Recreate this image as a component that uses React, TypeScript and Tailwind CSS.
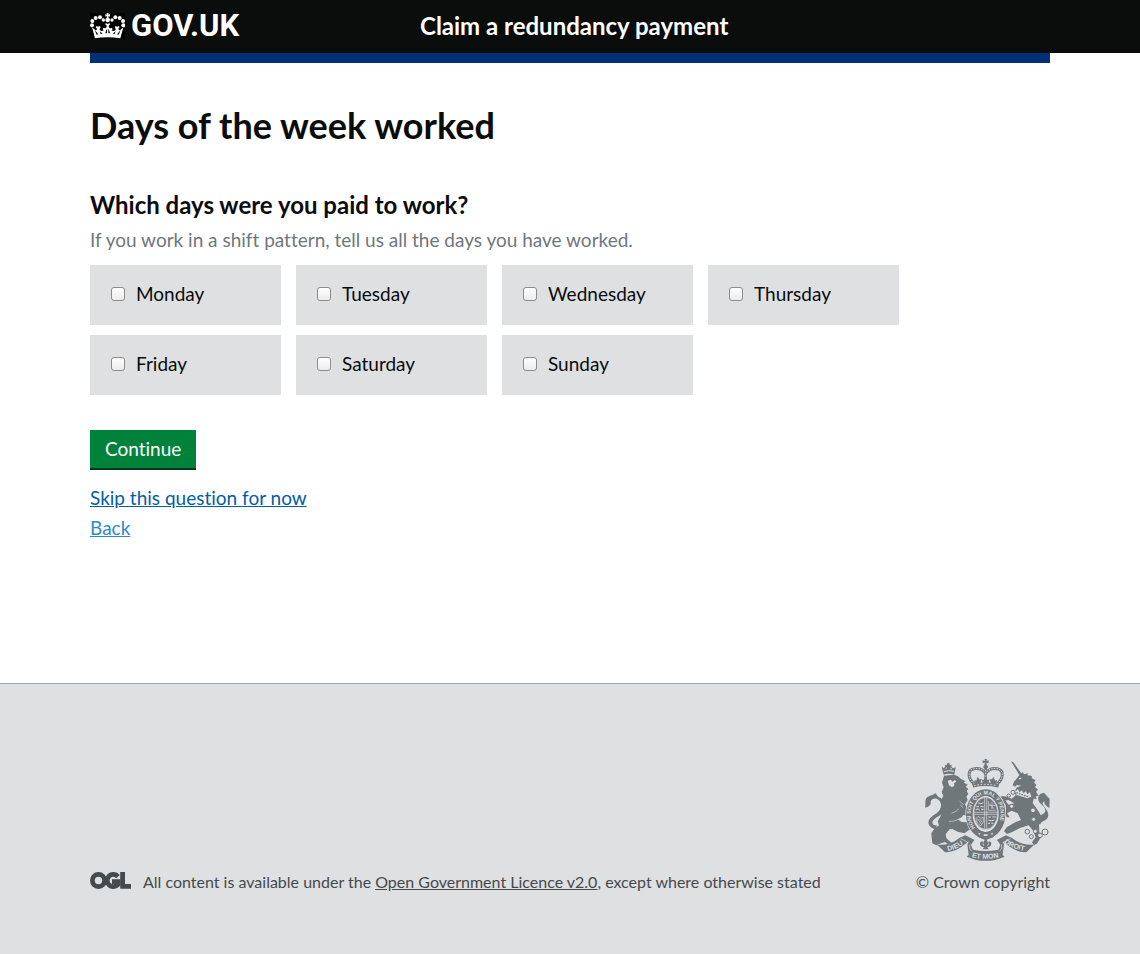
import React from "react";

const days = ["Monday", "Tuesday", "Wednesday", "Thursday", "Friday", "Saturday", "Sunday"];

function Crown() {
  return (
    <svg viewBox="30 39 105 78" className="h-[26px] w-[35px] bg-black" fill="#fff" aria-hidden="true">
      <path d="M80 39h6l-1 5 5-2v8l-5-2 1 6h-6l1-6-5 2v-8l5 2z" />
      <circle cx="83" cy="60" r="7" />
      <circle cx="70" cy="60" r="5" />
      <circle cx="60" cy="52" r="6" />
      <circle cx="47" cy="54" r="6" />
      <circle cx="37" cy="63" r="6" />
      <circle cx="36" cy="76" r="6" />
      <circle cx="96" cy="60" r="5" />
      <circle cx="106" cy="52" r="6" />
      <circle cx="119" cy="54" r="6" />
      <circle cx="129" cy="63" r="6" />
      <circle cx="130" cy="76" r="6" />
      <path d="M36 82L46 91Q51 91 51 86Q45 83 49 78L54 80L59 78Q64 83 58 87L63 93Q69 94 71 91Q66 88 70 84L76 85Q81 83 80 76Q74 77 77 69L83 72L89 69Q92 77 86 76Q85 83 90 85L96 84Q100 88 95 91Q97 94 103 93L108 87Q102 83 107 78L112 80L117 78Q121 83 115 86Q115 91 120 91L130 82L121 115Q83 108 45 115Z" />
      <path d="M50 104l-6-14 11 13zM62 102l-3-8 9 7zM76 100l3-11 4-2 4 2 3 11zM104 102l3-8-9 7zM116 104l6-14-11 13z" fill="#000" />
      <path d="M83 88v14" stroke="#fff" strokeWidth="4" />
    </svg>
  );
}

function Ogl() {
  return (
    <svg viewBox="0 0 41 17" className="mt-0.5 h-[17px] w-[41px]" fill="none" stroke="#454a4c" strokeWidth="4.8" aria-hidden="true">
      <circle cx="8.500" cy="8.500" r="6.100" />
      <path d="M28 4.600A6.100 6.100 0 1 0 28 12.400V9.600H22" />
      <path d="M32.600 0V14.400H41" />
    </svg>
  );
}

function Arms() {
  return (
    <svg viewBox="30 27 375 306" className="h-[102px] w-[125px]" fill="#6f777b" aria-hidden="true">
      <g>
        <path d="M80 50L87 55L91 48L89 44L95 46L96 41L100 38L104 41L105 46L110 44L109 50L114 55L122 52L118 74Q101 68 86 74Z" />
        <path d="M87 65q14-6 30-1M92 56l4-3M106 54l5 3" stroke="#dee0e2" strokeWidth="3" fill="none" />
        <path d="M87 77L115 74L128 78L139 88L150 92L147 98L158 104L152 110L160 117L155 123L160 132L154 140L158 150L150 163L156 176L148 190L140 202L128 208L140 216L162 217L172 228L176 242L162 240L148 250L128 245L112 237L104 238L92 252L94 264L102 272L112 280L98 282L90 276L78 280L64 286L52 280L50 264L49 250L58 236L72 226L68 214L76 200L80 186L76 176L84 162L78 150L85 138L80 126L86 112L81 98Z" />
        <path d="M98 92l10-3 4 6 8-5 4 5-7 5 1 7-7 5-9-6z" fill="#dee0e2" />
        <path d="M110 190Q124 186 134 174M102 214Q116 216 130 208M134 154l12 10M136 164l10 12" stroke="#dee0e2" strokeWidth="2" fill="none" />
        <path d="M130 172l24 3 10 9-6 5 8 6-12 3-20-8z" />
        <path d="M62 237C36 232 35 211 50 200C63 191 83 181 77 159C72 142 52 141 47 154C49 165 42 170 30 173C33 161 28 151 36 142C45 136 60 134 61 129L70 141C87 147 94 160 87 180C81 198 58 202 53 214C50 222 56 227 66 226Z" />
      </g>

      <g fill="none" stroke="#6f777b">
        <path d="M178 102C160 88 154 60 178 56C196 53 205 60 212 70C219 60 228 53 246 56C270 60 264 88 246 102" strokeWidth="9" />
        <path d="M178 102C160 88 154 60 178 56C196 53 205 60 212 70C219 60 228 53 246 56C270 60 264 88 246 102" stroke="#dee0e2" strokeWidth="3" strokeDasharray="4 4" />
        <path d="M212 50v50" strokeWidth="8" />
        <path d="M212 60v30" stroke="#dee0e2" strokeWidth="3" strokeDasharray="4 4" />
        <path d="M173 107q39-9 78 0" strokeWidth="11" />
        <path d="M177 107q35-8 70 0" stroke="#dee0e2" strokeWidth="3" strokeDasharray="5 5" />
      </g>
      <path d="M208 27h8l-2 6 7-2v9l-7-2 2 7 4 7-8 6-8-6 4-7 2-7-7 2v-9l7 2zM188 80l5 8 7 0-4 11-16 3-2-12 6 2zM236 80l-5 8-7 0 4 11 16 3 2-12-6 2zM212 82l6 8 6-2-4 12h-16l-4-12 6 2z" />

      <g>
        <path d="M288 34l7 3 27 37-7 4z" />
        <path d="M313 76L323 66L327 73L339 70L337 76L351 78L350 85L362 90L357 97L364 105L360 111L369 119L363 125L371 137L362 139L365 147L356 146L353 159L358 166L372 186L380 202L372 226L373 246L377 262L367 280L357 286L351 277L362 262L355 243L341 226L317 233L290 247L276 252L267 244L275 232L302 216L318 210L308 190L290 182L276 190L284 202L276 202L264 188L261 170L273 184L272 166L262 150L272 152L280 164L298 160L280 150L268 152L252 142L262 138L276 140L290 146L302 136L298 124L306 112L320 107L306 105L300 110L293 106L297 95L304 87Z" />
        <path d="M312 86l7-1" stroke="#dee0e2" strokeWidth="4" />
        <path d="M297 118L303 123L309 117L313 127L321 121L325 130L333 124L337 133L345 127L349 140L337 145L305 135Z" fill="#dee0e2" />
        <path d="M304 128l38 13M330 160q8 10 22 12" fill="none" stroke="#6f777b" strokeWidth="4" strokeDasharray="5 3" />
        <path d="M369 221C363 207 371 198 384 192C396 185 392 175 379 163C362 148 370 129 387 128L404 147L403 174C396 170 387 164 388 154C377 159 387 169 395 180C404 195 400 207 386 213C379 216 376 218 377 223Z" />
      </g>
      <g fill="#dee0e2" stroke="#6f777b" strokeWidth="3">
        <circle cx="294" cy="127" r="6" />
        <circle cx="281" cy="137" r="5" />
        <circle cx="290" cy="169" r="6" />
        <circle cx="354" cy="181" r="7" />
        <circle cx="356" cy="208" r="6" />
        <circle cx="337" cy="245" r="7" />
        <circle cx="349" cy="260" r="6" />
        <circle cx="361" cy="244" r="6" />
        <circle cx="375" cy="256" r="7" />
        <circle cx="390" cy="246" r="9" />
      </g>

      <ellipse cx="212" cy="192" rx="61" ry="77" fill="#dee0e2" />
      <ellipse cx="212" cy="192" rx="49" ry="64" fill="none" stroke="#6f777b" strokeWidth="20" />
      <path id="garter" d="M180 234A45 59 0 1 1 244 234" fill="none" />
      <text fill="#dee0e2" fontSize="16" fontWeight="700" fontFamily="Liberation Sans">
        <textPath href="#garter">HONI SOIT QUI MAL Y PENSE</textPath>
      </text>
      <path d="M177 239l18 3 17 5 17-5 18-3-12 22-23 10-23-10z" />
      <path d="M190 248l8 3-6 4zM234 248l-8 3 6 4zM206 253h12v5h-12z" fill="#dee0e2" />
      <ellipse cx="212" cy="190" rx="36" ry="48" fill="#6f777b" />
      <g stroke="#dee0e2" strokeWidth="3" fill="none">
        <ellipse cx="212" cy="190" rx="36" ry="48" strokeWidth="2" />
        <path d="M209 143v93M215 143v93M177 187h70M177 193h70" strokeWidth="2" />
        <path d="M190 159q8 5 15-1M184 170h8m4 0h10M182 179q8-5 12 1m4-2h8" />
        <path d="M220 201h8m4 0h10M220 210q9 5 18 0M219 220h6m4 0h6" />
        <path d="M189 199l-6 7q1 15 14 22l8-12V202q-8 7-16-3zM188 206l11 17M194 207l7 10" strokeWidth="2" />
        <path d="M220 153v28h22M231 155v22M222 166h19M222 160l16 17" strokeWidth="2" />
      </g>

      <path d="M66 284q38 4 67-20l18-8 28 14-18 14-1-10-10 9q-33 27-61 23l-8-8z" />
      <path d="M358 284q-38 4-67-20l-18-8-28 14 18 14 1-10 10 9q33 27 61 23l8-8z" />
      <path d="M157 281l20-11-9 15 6 14q38 8 76 0l6-14-9-15 20 11-4 34 6 5q-57 25-114 0l6-5z" />
      <path d="M137 266l20 10M287 266l-20 10M165 283q-5 12 5 21M259 283q5 12-5 21" stroke="#dee0e2" strokeWidth="2" fill="none" />
      <path d="M212 267q12 11 4 20 6 0 5-6-4-5 2-7 10 4 4 13-4 5-10 4l4 7h-18l4-7q-6 1-10-4-6-9 4-13 6 2 2 7-1 6 5 6-8-9 4-20z" />
      <g fill="#dee0e2" fontSize="21" fontWeight="700" fontFamily="Liberation Sans">
        <path id="dieu" d="M99 303Q129 297 160 272" fill="none" />
        <text><textPath href="#dieu">DIEU</textPath></text>
        <path id="etmon" d="M170 322Q212 332 262 320" fill="none" />
        <text><textPath href="#etmon">ET MON</textPath></text>
        <path id="droit" d="M267 279Q297 299 340 304" fill="none" />
        <text><textPath href="#droit">DROIT</textPath></text>
      </g>
    </svg>
  );
}

export default function App() {
  return (
    <div className="flex min-h-screen flex-col bg-white font-['Lato',sans-serif] text-[19px] leading-[30px] text-[#0b0c0c] [font-variant-ligatures:none]">
      <header className="bg-[#0b0c0c] text-white">
        <div className="mx-auto flex h-[53px] max-w-[960px] items-center pb-px">
          <a href="#" className="flex w-[330px] items-center gap-1.5 font-['Roboto',sans-serif] text-[31px] leading-[30px] font-bold">
            <Crown />
            <span>GOV.UK</span>
          </a>
          <span className="text-[24px] font-bold">Claim a redundancy payment</span>
        </div>
      </header>
      <main className="mx-auto w-full max-w-[960px] grow">
        <div className="h-[10px] bg-[#003078]" />
        <h1 className="mt-[41px] text-[36px] leading-[42px] font-bold">Days of the week worked</h1>
        <form className="mt-[43px]" onSubmit={(e) => e.preventDefault()}>
          <fieldset>
            <legend className="text-[24px] leading-[32px] font-bold">Which days were you paid to work?</legend>
            <p className="mt-1 text-[#6f777b]">If you work in a shift pattern, tell us all the days you have worked.</p>
            <div className="mt-[10px] flex flex-wrap gap-x-[15px] gap-y-[10px] pr-[150px]">
              {days.map((day) => (
                <label key={day} className="flex h-[60px] w-[191px] items-center gap-[11px] bg-[#dee0e2] pb-0.5 pl-[21px]">
                  <input
                    type="checkbox"
                    name="days"
                    value={day}
                    className="size-[14px] appearance-none rounded-[3px] border border-[#8c8c8c] bg-linear-to-b from-white to-[#ececec] checked:bg-[#005ea5]"
                  />
                  {day}
                </label>
              ))}
            </div>
          </fieldset>
          <button type="submit" className="mt-[35px] h-[40px] border-b-2 border-[#003618] bg-[#00823b] px-[15px] text-white">
            Continue
          </button>
          <p className="mt-[13px]"><a href="#" className="text-[#005ea5] underline">Skip this question for now</a></p>
          <p><a href="#" className="text-[#2e8aca] underline">Back</a></p>
        </form>
      </main>
      <footer className="border-t border-[#a1acb2] bg-[#dee0e2] pt-[75px] pb-[60px] text-[16px] leading-[24px] text-[#454a4c]">
        <div className="mx-auto flex max-w-[960px] items-end justify-between">
          <div className="flex items-start gap-3">
            <Ogl />
            <p>All content is available under the <a href="#" className="underline">Open Government Licence v2.0</a>, except where otherwise stated</p>
          </div>
          <a href="#" className="flex flex-col items-end gap-[9px]">
            <Arms />
            <span>© Crown copyright</span>
          </a>
        </div>
      </footer>
    </div>
  );
}
